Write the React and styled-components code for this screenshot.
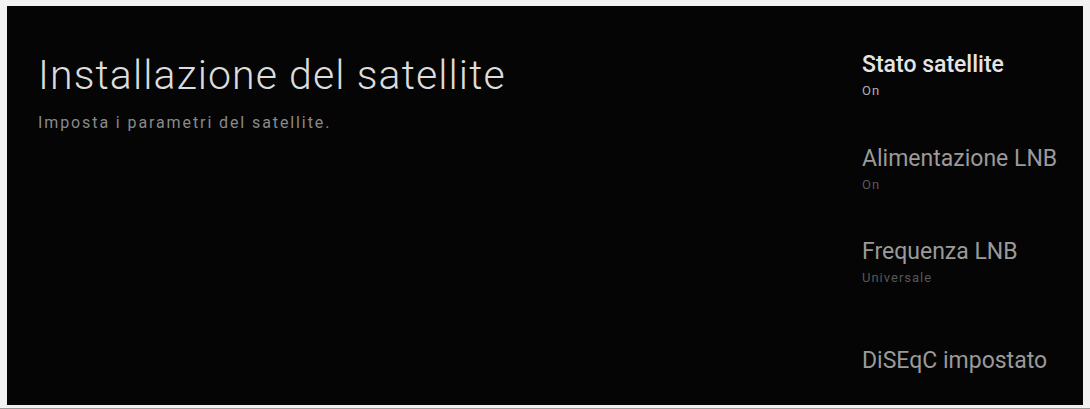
import React from "react";
import styled, { createGlobalStyle } from "styled-components";

const GlobalStyle = createGlobalStyle`
  html, body {
    margin: 0;
    padding: 0;
    background: #f2f2f2;
  }
  body {
    font-family: Roboto, "Noto Sans", sans-serif;
  }
`;

const Frame = styled.div`
  width: 1090px;
  height: 409px;
  box-sizing: border-box;
  padding: 6px 7px 3px 7px;
  background: #f2f2f2;
  border-bottom: 1px solid #9a9a9a;
`;

const Screen = styled.div`
  height: 100%;
  background: #040504;
  display: flex;
  justify-content: space-between;
  overflow: hidden;
`;

const Intro = styled.div`
  padding: 45px 0 0 31px;
`;

const Title = styled.h1`
  margin: 0;
  font-size: 41px;
  font-weight: 300;
  line-height: 48px;
  color: #dcdcdc;
  letter-spacing: 1.1px;
`;

const Subtitle = styled.p`
  margin: 14px 0 0 0;
  font-size: 16px;
  font-weight: 400;
  line-height: 20px;
  color: #8a8a8a;
  letter-spacing: 1.9px;
`;

const Menu = styled.div`
  width: 221px;
  padding-top: 46px;
  display: flex;
  flex-direction: column;
`;

const Item = styled.div`
  height: ${(p) => p.h}px;
`;

const ItemTitle = styled.div`
  font-size: 23px;
  line-height: 26px;
  font-weight: ${(p) => (p.active ? 500 : 400)};
  color: ${(p) => (p.active ? "#e4e4e4" : "#9a9a9a")};
  white-space: nowrap;
`;

const ItemValue = styled.div`
  margin-top: 5px;
  font-size: 13px;
  font-weight: 400;
  line-height: 16px;
  letter-spacing: 1px;
  color: ${(p) => (p.active ? "#b0b0b0" : "#585858")};
`;

const items = [
  { title: "Stato satellite", value: "On", h: 98, active: true },
  { title: "Alimentazione LNB", value: "On", h: 97 },
  { title: "Frequenza LNB", value: "Universale", h: 114 },
  { title: "DiSEqC impostato", value: "", h: 60 },
];

const App = () => {
  return (
    <>
      <GlobalStyle />
      <Frame>
        <Screen>
          <Intro>
            <Title>Installazione del satellite</Title>
            <Subtitle>Imposta i parametri del satellite.</Subtitle>
          </Intro>
          <Menu>
            {items.map((it) => (
              <Item key={it.title} h={it.h}>
                <ItemTitle active={it.active}>{it.title}</ItemTitle>
                {it.value && <ItemValue active={it.active}>{it.value}</ItemValue>}
              </Item>
            ))}
          </Menu>
        </Screen>
      </Frame>
    </>
  );
};

export default App;
